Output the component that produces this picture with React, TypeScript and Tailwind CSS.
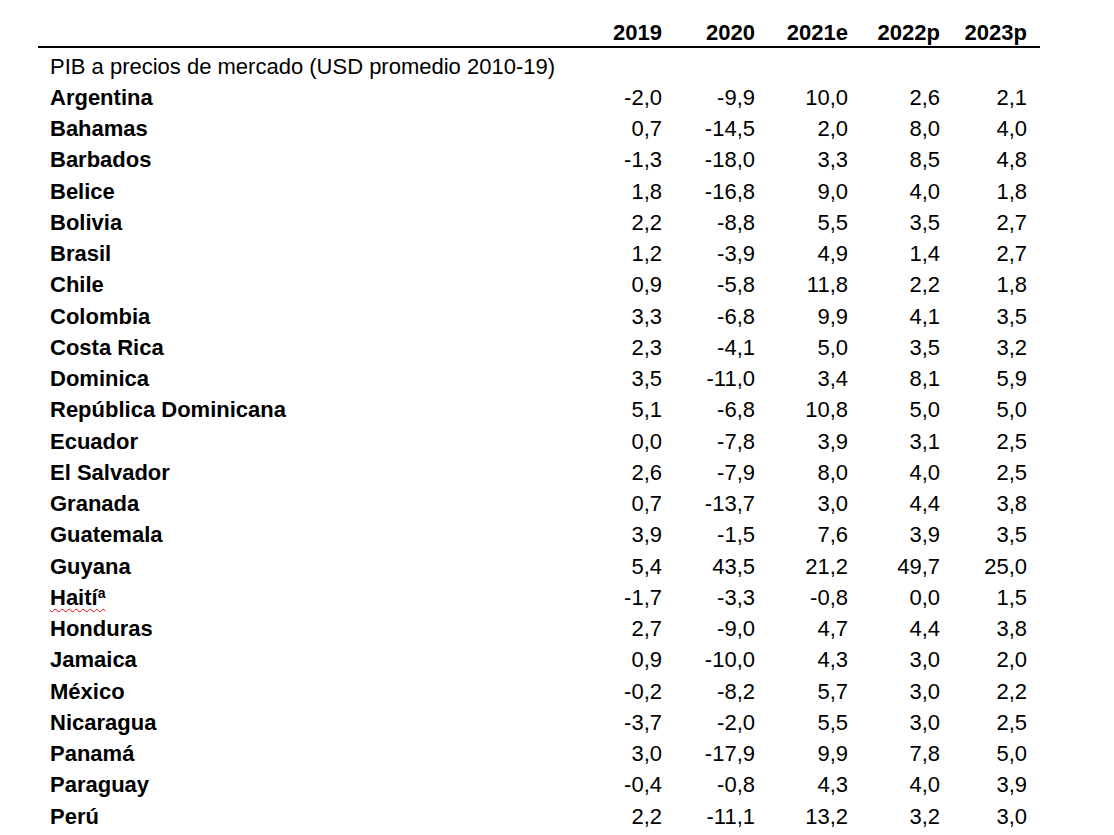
import React from "react";

type Row = { name: string; values: string[]; note?: string };

const years = ["2019", "2020", "2021e", "2022p", "2023p"];

const rows: Row[] = [
  { name: "Argentina", values: ["-2,0", "-9,9", "10,0", "2,6", "2,1"] },
  { name: "Bahamas", values: ["0,7", "-14,5", "2,0", "8,0", "4,0"] },
  { name: "Barbados", values: ["-1,3", "-18,0", "3,3", "8,5", "4,8"] },
  { name: "Belice", values: ["1,8", "-16,8", "9,0", "4,0", "1,8"] },
  { name: "Bolivia", values: ["2,2", "-8,8", "5,5", "3,5", "2,7"] },
  { name: "Brasil", values: ["1,2", "-3,9", "4,9", "1,4", "2,7"] },
  { name: "Chile", values: ["0,9", "-5,8", "11,8", "2,2", "1,8"] },
  { name: "Colombia", values: ["3,3", "-6,8", "9,9", "4,1", "3,5"] },
  { name: "Costa Rica", values: ["2,3", "-4,1", "5,0", "3,5", "3,2"] },
  { name: "Dominica", values: ["3,5", "-11,0", "3,4", "8,1", "5,9"] },
  { name: "República Dominicana", values: ["5,1", "-6,8", "10,8", "5,0", "5,0"] },
  { name: "Ecuador", values: ["0,0", "-7,8", "3,9", "3,1", "2,5"] },
  { name: "El Salvador", values: ["2,6", "-7,9", "8,0", "4,0", "2,5"] },
  { name: "Granada", values: ["0,7", "-13,7", "3,0", "4,4", "3,8"] },
  { name: "Guatemala", values: ["3,9", "-1,5", "7,6", "3,9", "3,5"] },
  { name: "Guyana", values: ["5,4", "43,5", "21,2", "49,7", "25,0"] },
  { name: "Haití", note: "a", values: ["-1,7", "-3,3", "-0,8", "0,0", "1,5"] },
  { name: "Honduras", values: ["2,7", "-9,0", "4,7", "4,4", "3,8"] },
  { name: "Jamaica", values: ["0,9", "-10,0", "4,3", "3,0", "2,0"] },
  { name: "México", values: ["-0,2", "-8,2", "5,7", "3,0", "2,2"] },
  { name: "Nicaragua", values: ["-3,7", "-2,0", "5,5", "3,0", "2,5"] },
  { name: "Panamá", values: ["3,0", "-17,9", "9,9", "7,8", "5,0"] },
  { name: "Paraguay", values: ["-0,4", "-0,8", "4,3", "4,0", "3,9"] },
  { name: "Perú", values: ["2,2", "-11,1", "13,2", "3,2", "3,0"] },
];

const grid = "grid grid-cols-[531px_93px_93px_93px_92px_100px]";

export default function App() {
  return (
    <div className="min-h-[835px] w-[1114px] overflow-hidden bg-white pl-[38px] pt-[17px] font-['Liberation_Sans',Arial,sans-serif] text-[22px] text-black">
      <div className="w-[1002px]">
        <div className={`${grid} h-[31px] items-center border-b-2 border-black font-bold`}>
          <div />
          {years.map((y, i) => (
            <div key={y} className={`text-right leading-[31px] ${i === 4 ? "pr-[13px]" : ""}`}>
              {y}
            </div>
          ))}
        </div>

        <div className="pt-[2.5px]">
          <div className={`${grid} h-[31.26px] leading-[31.26px]`}>
            <div className="col-span-6 pl-[12px]">
              PIB a precios de mercado (USD promedio 2010-19)
            </div>
          </div>
          {rows.map((r) => (
            <div key={r.name} className={`${grid} h-[31.26px] leading-[31.26px]`}>
              <div className="pl-[12px] font-bold whitespace-nowrap">
                {r.note ? (
                  <span className="underline decoration-wavy decoration-red-600 decoration-1 underline-offset-[3px]">
                    {r.name}
                    <sup className="text-[14px]">{r.note}</sup>
                  </span>
                ) : (
                  r.name
                )}
              </div>
              {r.values.map((v, i) => (
                <div key={i} className={`text-right ${i === 4 ? "pr-[13px]" : ""}`}>
                  {v}
                </div>
              ))}
            </div>
          ))}
        </div>
      </div>
    </div>
  );
}
